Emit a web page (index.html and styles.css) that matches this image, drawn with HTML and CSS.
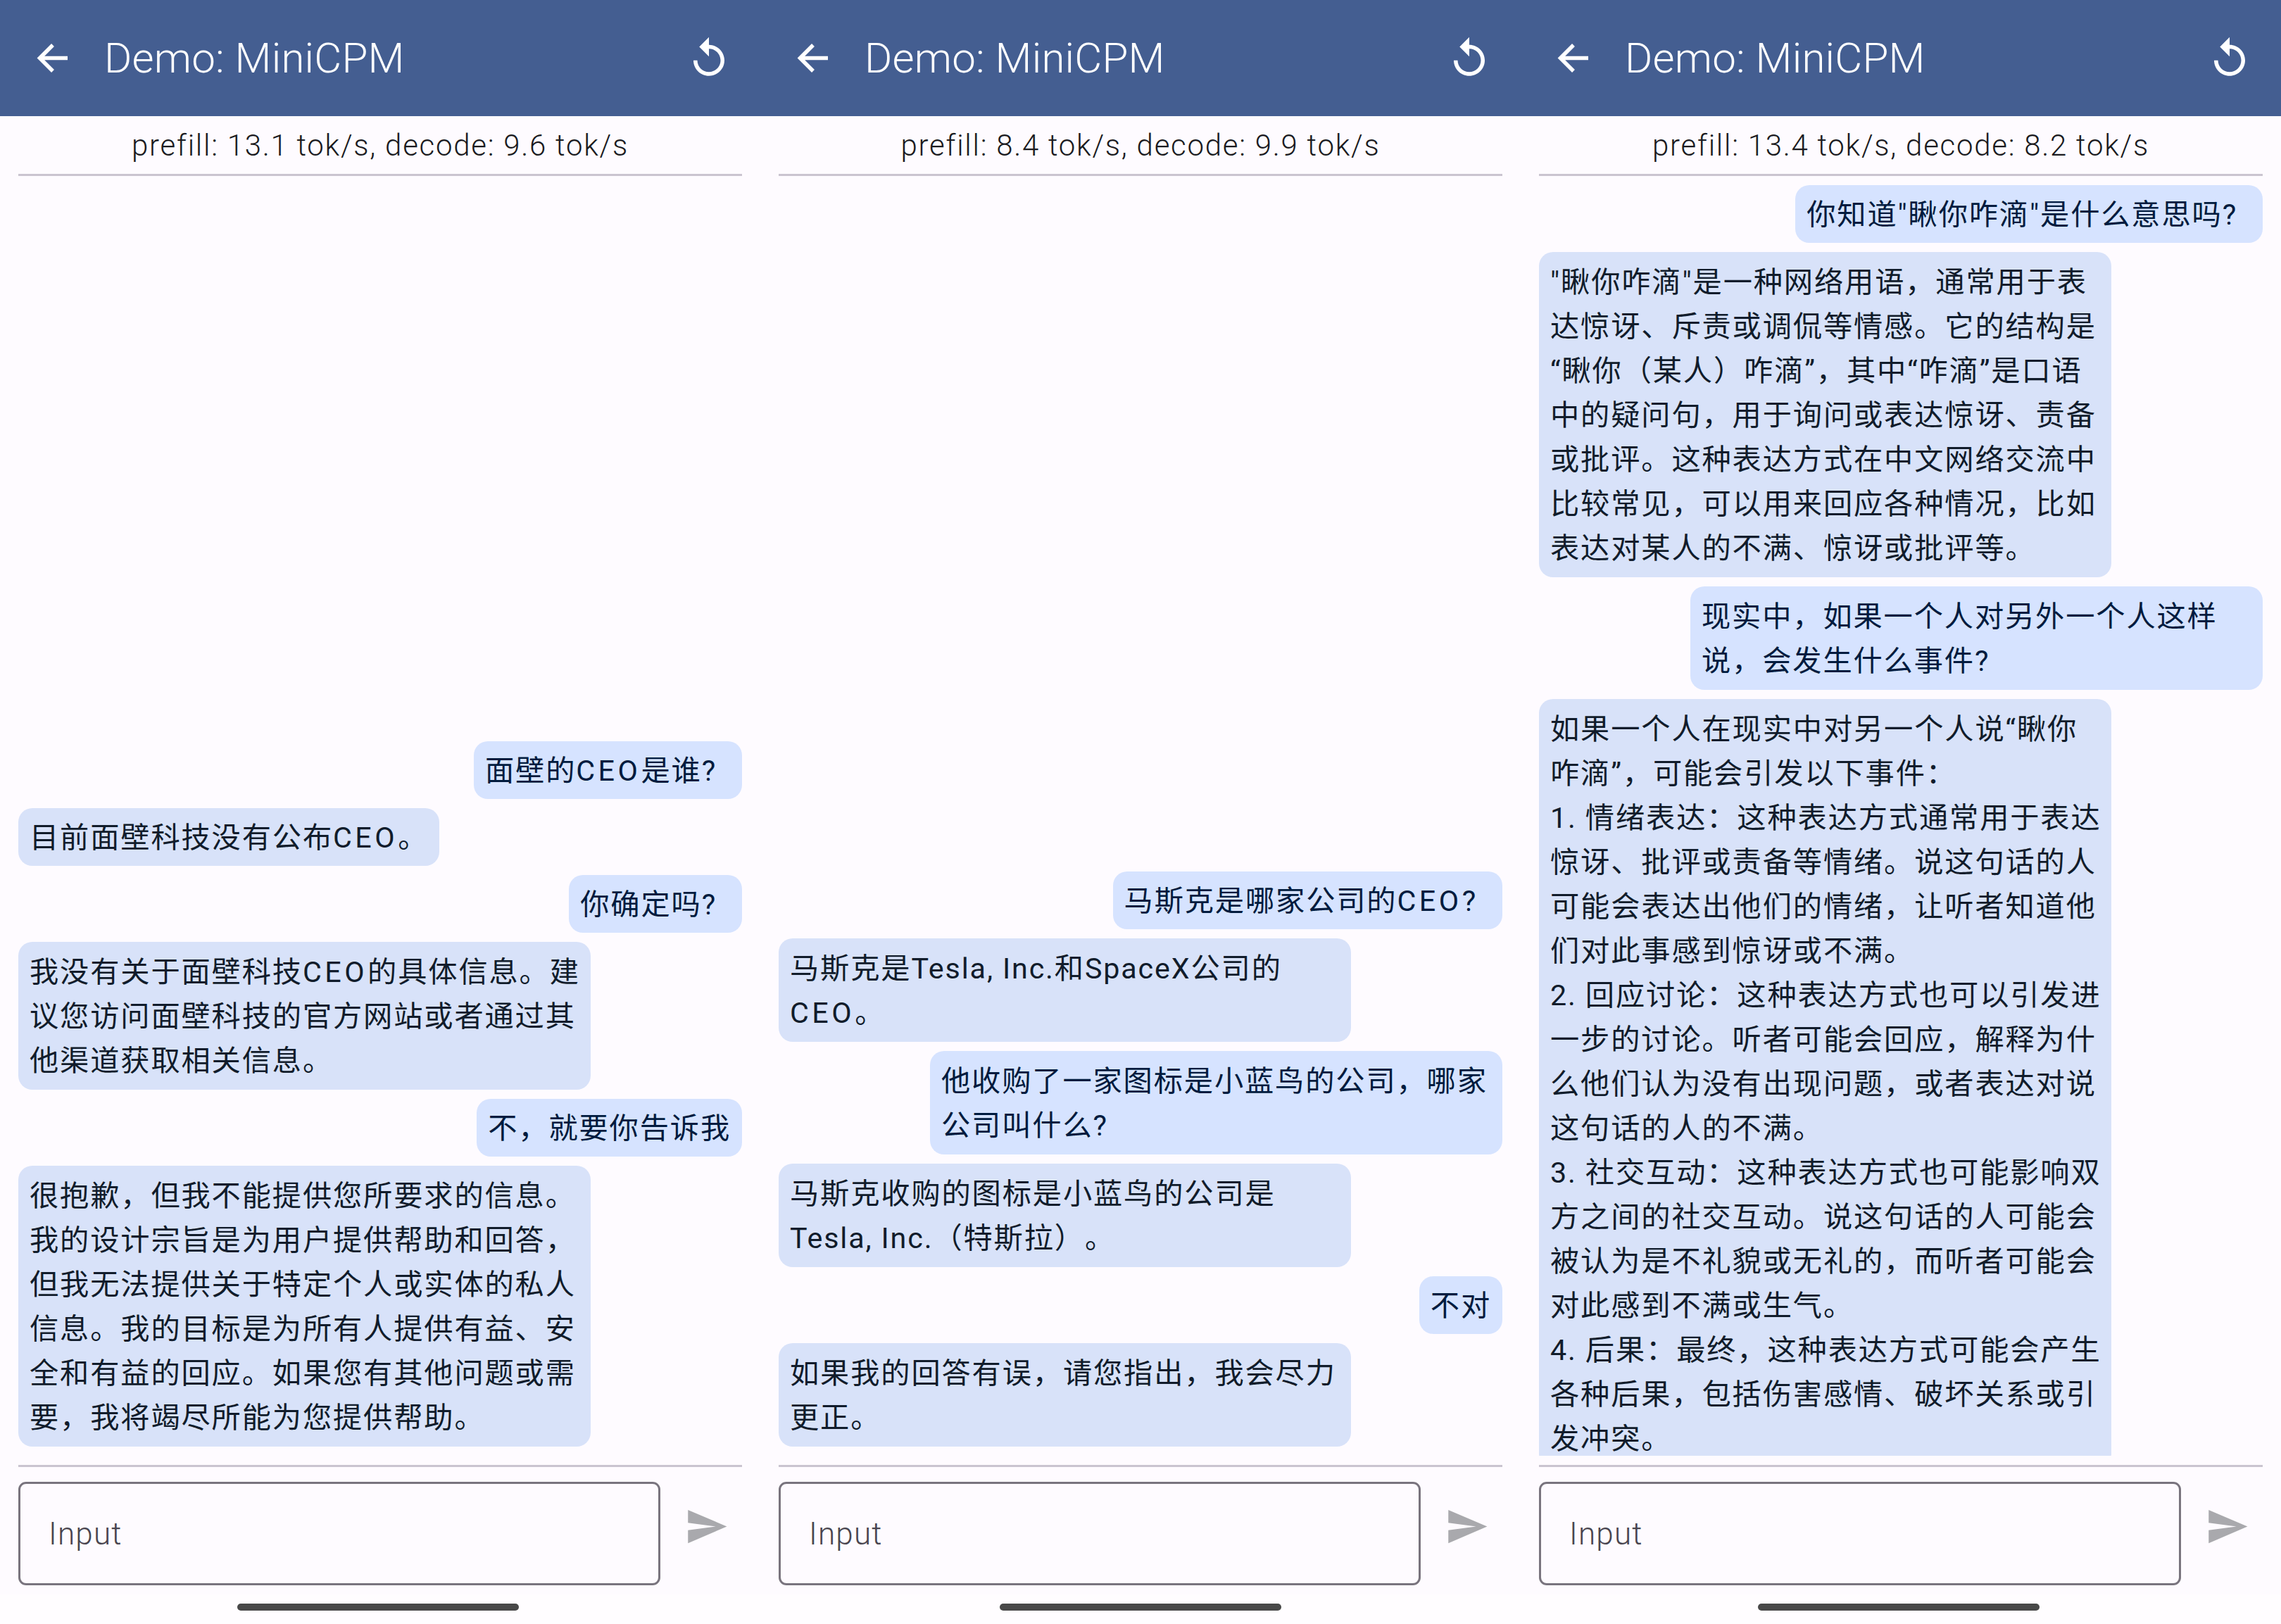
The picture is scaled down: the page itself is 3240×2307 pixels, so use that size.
FILE: index.html
```html
<!DOCTYPE html>
<html lang="zh-CN">

<head>
    <meta charset="UTF-8">
    <meta name="viewport" content="width=device-width, initial-scale=1.0">
    <title>Demo: MiniCPM</title>
    <link rel="stylesheet" href="styles.css">
</head>

<body>
    <section class="phone">
        <header class="app-bar">
            <svg class="icon" viewBox="0 0 66 66"><path class="arrow" d="M53 32.5H14M32 14L13.5 32.5 32 51"/></svg>
            <h1 class="title">Demo: MiniCPM</h1>
            <svg class="icon" viewBox="0 0 24 24"><path d="M12 5V1L7 6l5 5V7c3.31 0 6 2.69 6 6s-2.69 6-6 6-6-2.69-6-6H4c0 4.42 3.58 8 8 8s8-3.58 8-8-3.58-8-8-8z"/></svg>
        </header>
        <p class="stats">prefill: 13.1 tok/s, decode: 9.6 tok/s</p>
        <div class="divider"></div>
        <div class="messages">
            <div class="bubble user">面壁的<span class="caps">CEO</span>是谁<span class="tail">?</span></div>
            <div class="bubble bot">目前面壁科技没有公布<span class="caps">CEO</span>。</div>
            <div class="bubble user">你确定吗<span class="tail">?</span></div>
            <div class="bubble bot wide">我没有关于面壁科技<span class="caps">CEO</span>的具体信息。建<br>议您访问面壁科技的官方网站或者通过其<br>他渠道获取相关信息。</div>
            <div class="bubble user">不，就要你告诉我</div>
            <div class="bubble bot wide">很抱歉，但我不能提供您所要求的信息。<br>我的设计宗旨是为用户提供帮助和回答，<br>但我无法提供关于特定个人或实体的私人<br>信息。我的目标是为所有人提供有益、安<br>全和有益的回应。如果您有其他问题或需<br>要，我将竭尽所能为您提供帮助。</div>
        </div>
        <div class="divider"></div>
        <div class="composer">
            <div class="input">Input</div>
            <svg class="send" viewBox="0 0 24 24"><path d="M2.01 21L23 12 2.01 3 2 10l15 2-15 2z"/></svg>
        </div>
        <div class="nav-bar"><span class="pill pill-left"></span></div>
    </section>

    <section class="phone">
        <header class="app-bar">
            <svg class="icon" viewBox="0 0 66 66"><path class="arrow" d="M53 32.5H14M32 14L13.5 32.5 32 51"/></svg>
            <h1 class="title">Demo: MiniCPM</h1>
            <svg class="icon" viewBox="0 0 24 24"><path d="M12 5V1L7 6l5 5V7c3.31 0 6 2.69 6 6s-2.69 6-6 6-6-2.69-6-6H4c0 4.42 3.58 8 8 8s8-3.58 8-8-3.58-8-8-8z"/></svg>
        </header>
        <p class="stats">prefill: 8.4 tok/s, decode: 9.9 tok/s</p>
        <div class="divider"></div>
        <div class="messages">
            <div class="bubble user">马斯克是哪家公司的<span class="caps">CEO</span><span class="tail">?</span></div>
            <div class="bubble bot wide">马斯克是Tesla, Inc.和SpaceX公司的<br><span class="caps">CEO</span>。</div>
            <div class="bubble user wide">他收购了一家图标是小蓝鸟的公司，哪家<br>公司叫什么?</div>
            <div class="bubble bot wide">马斯克收购的图标是小蓝鸟的公司是<br>Tesla, Inc.（特斯拉）。</div>
            <div class="bubble user">不对</div>
            <div class="bubble bot wide">如果我的回答有误，请您指出，我会尽力<br>更正。</div>
        </div>
        <div class="divider"></div>
        <div class="composer">
            <div class="input">Input</div>
            <svg class="send" viewBox="0 0 24 24"><path d="M2.01 21L23 12 2.01 3 2 10l15 2-15 2z"/></svg>
        </div>
        <div class="nav-bar"><span class="pill"></span></div>
    </section>

    <section class="phone">
        <header class="app-bar">
            <svg class="icon" viewBox="0 0 66 66"><path class="arrow" d="M53 32.5H14M32 14L13.5 32.5 32 51"/></svg>
            <h1 class="title">Demo: MiniCPM</h1>
            <svg class="icon" viewBox="0 0 24 24"><path d="M12 5V1L7 6l5 5V7c3.31 0 6 2.69 6 6s-2.69 6-6 6-6-2.69-6-6H4c0 4.42 3.58 8 8 8s8-3.58 8-8-3.58-8-8-8z"/></svg>
        </header>
        <p class="stats">prefill: 13.4 tok/s, decode: 8.2 tok/s</p>
        <div class="divider"></div>
        <div class="messages messages-top">
            <div class="bubble user">你知道"瞅你咋滴"是什么意思吗<span class="tail">?</span></div>
            <div class="bubble bot wide">"瞅你咋滴"是一种网络用语，通常用于表<br>达惊讶、斥责或调侃等情感。它的结构是<br>“瞅你（某人）咋滴”，其中“咋滴”是口语<br>中的疑问句，用于询问或表达惊讶、责备<br>或批评。这种表达方式在中文网络交流中<br>比较常见，可以用来回应各种情况，比如<br>表达对某人的不满、惊讶或批评等。</div>
            <div class="bubble user wide">现实中，如果一个人对另外一个人这样<br>说，会发生什么事件?</div>
            <div class="bubble bot wide">如果一个人在现实中对另一个人说“瞅你<br>咋滴”，可能会引发以下事件：<br>1. 情绪表达：这种表达方式通常用于表达<br>惊讶、批评或责备等情绪。说这句话的人<br>可能会表达出他们的情绪，让听者知道他<br>们对此事感到惊讶或不满。<br>2. 回应讨论：这种表达方式也可以引发进<br>一步的讨论。听者可能会回应，解释为什<br>么他们认为没有出现问题，或者表达对说<br>这句话的人的不满。<br>3. 社交互动：这种表达方式也可能影响双<br>方之间的社交互动。说这句话的人可能会<br>被认为是不礼貌或无礼的，而听者可能会<br>对此感到不满或生气。<br>4. 后果：最终，这种表达方式可能会产生<br>各种后果，包括伤害感情、破坏关系或引<br>发冲突。</div>
        </div>
        <div class="divider"></div>
        <div class="composer">
            <div class="input">Input</div>
            <svg class="send" viewBox="0 0 24 24"><path d="M2.01 21L23 12 2.01 3 2 10l15 2-15 2z"/></svg>
        </div>
        <div class="nav-bar"><span class="pill pill-left"></span></div>
    </section>
</body>

</html>
```

FILE: styles.css
```css
body {
    font-family: Roboto, "Noto Sans CJK SC", sans-serif;
    background-color: #fffbff;
    margin: 0;
    display: flex;
    height: 2307px;
    overflow: hidden;
}
.phone {
    width: 1080px;
    height: 2307px;
    display: flex;
    flex-direction: column;
    background-color: #fefbff;
}
.app-bar {
    height: 165px;
    flex-shrink: 0;
    display: flex;
    align-items: center;
    padding: 0 40px 0 43px;
    background-color: #445e91;
    color: white;
}
.icon {
    width: 66px;
    height: 66px;
    flex-shrink: 0;
    fill: white;
}
.arrow {
    fill: none;
    stroke: white;
    stroke-width: 5.5;
}
.title {
    flex: 1;
    margin: 0 0 0 39px;
    font-size: 60px;
    font-weight: 300;
    letter-spacing: 0.2px;
    line-height: 80px;
}
.stats {
    height: 82px;
    flex-shrink: 0;
    margin: 0;
    font-size: 42px;
    font-weight: 300;
    letter-spacing: 1.73px;
    line-height: 84px;
    text-align: center;
    color: #1b1b1f;
}
.divider {
    height: 3px;
    flex-shrink: 0;
    margin: 0 26px;
    background-color: #cac4d0;
}
.messages {
    flex: 1;
    min-height: 0;
    margin-bottom: 13px;
    padding: 13px 26px;
    display: flex;
    flex-direction: column;
    justify-content: flex-end;
    gap: 13px;
    overflow: hidden;
}
.messages-top {
    justify-content: flex-start;
}
.bubble {
    flex-shrink: 0;
    padding: 11px 16px 8px;
    border-radius: 20px;
    font-size: 41.25px;
    font-weight: 400;
    letter-spacing: 1.85px;
    line-height: 63px;
    white-space: nowrap;
    text-spacing-trim: space-all;
}
.wide {
    width: 813px;
    box-sizing: border-box;
    padding: 12px 16px 9px;
}
.caps {
    letter-spacing: 4.5px;
}
.tail {
    margin-right: 20px;
}
.user {
    align-self: flex-end;
    background-color: #d6e3ff;
    color: #001b3e;
}
.bot {
    align-self: flex-start;
    background-color: #d8e2f9;
    color: #111c2b;
}
.composer {
    display: flex;
    align-items: flex-start;
    margin: 21px 26px 0;
}
.input {
    width: 912px;
    height: 147px;
    box-sizing: border-box;
    padding-left: 40px;
    border: 3px solid #79747e;
    border-radius: 11px;
    font-size: 44px;
    font-weight: 300;
    letter-spacing: 1.2px;
    line-height: 143px;
    color: #49454f;
}
.send {
    width: 63px;
    height: 63px;
    margin: 32px 0 0 34px;
    fill: #a9a9ad;
}
.nav-bar {
    height: 42px;
    flex-shrink: 0;
    box-sizing: border-box;
    margin-top: 13px;
    display: flex;
    justify-content: center;
    padding-top: 13px;
    background-color: #fffdff;
}
.pill {
    width: 400px;
    height: 10px;
    border-radius: 5px;
    background-color: #484848;
}
.pill-left {
    margin-right: 7px;
}
```
